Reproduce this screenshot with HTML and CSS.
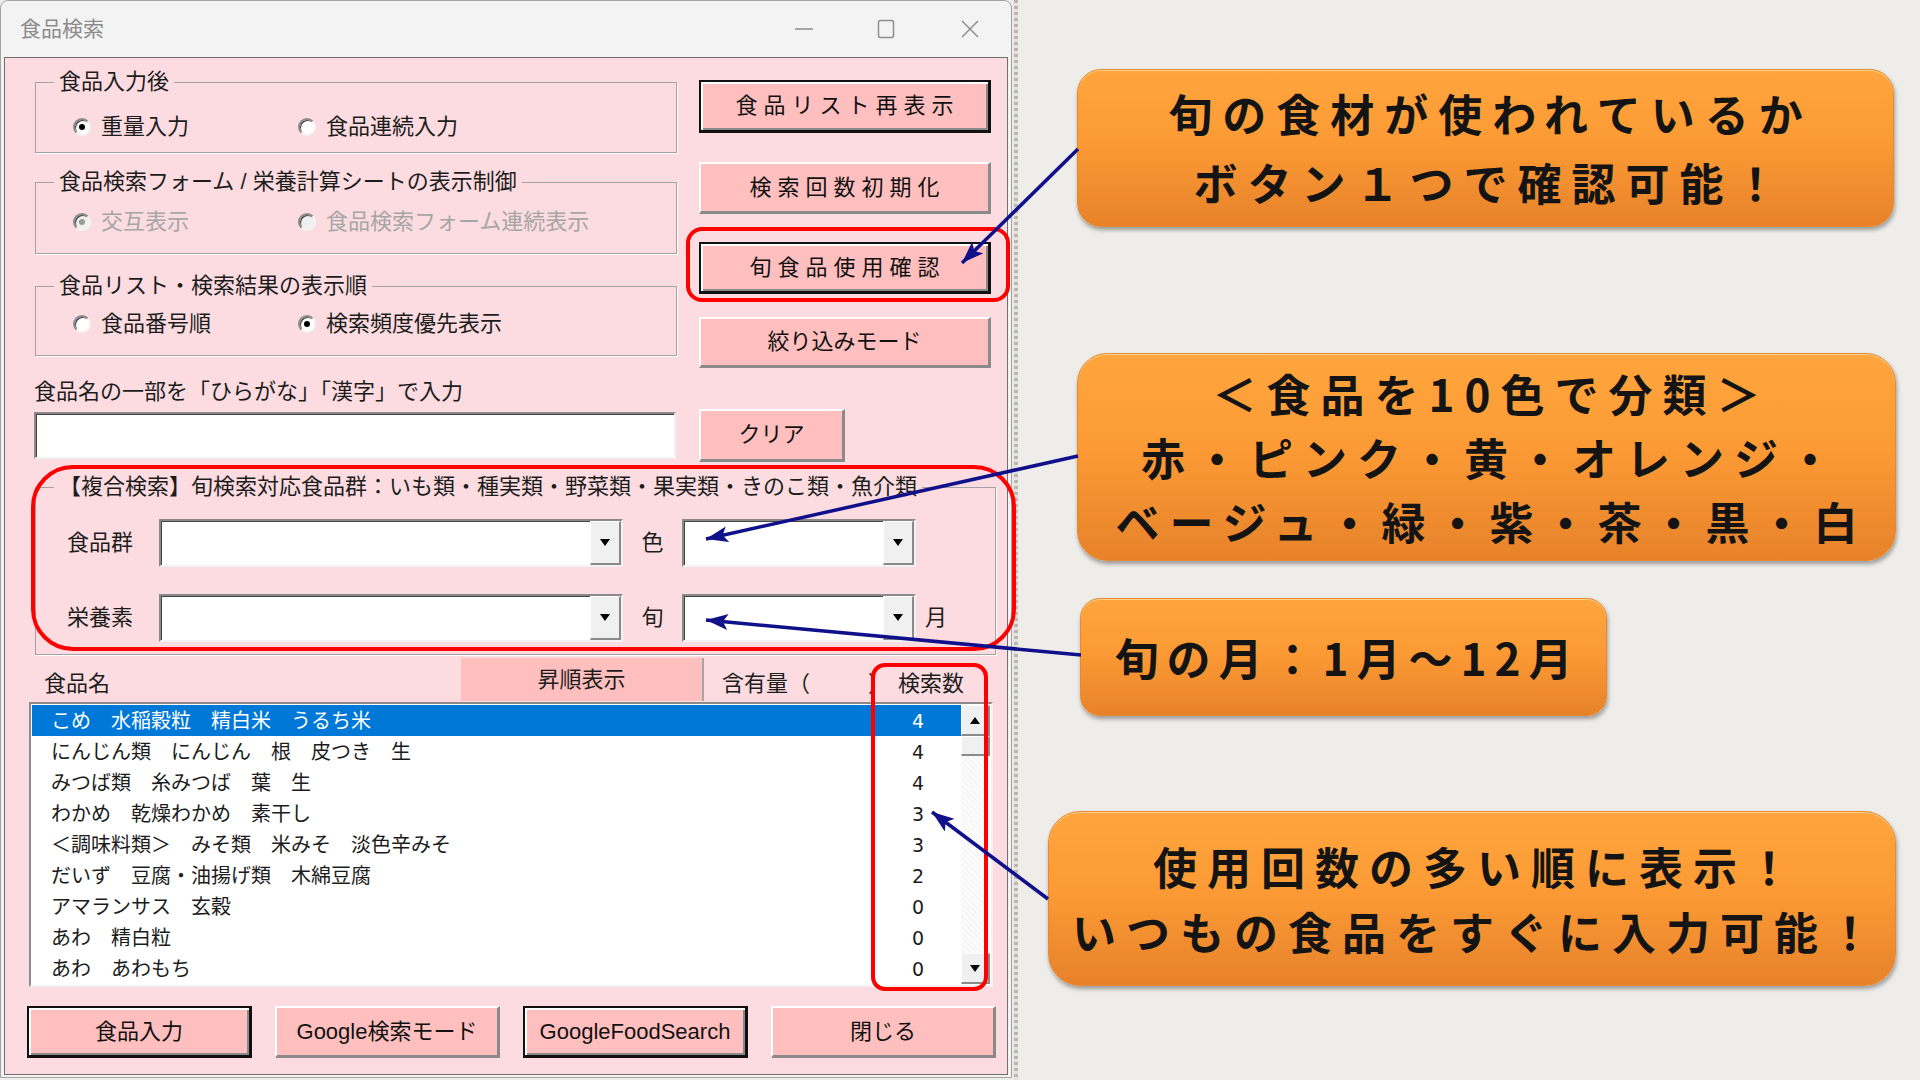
FILE: index.html
```html
<!DOCTYPE html>
<html lang="ja">
<head>
<meta charset="utf-8">
<title>食品検索</title>
<link rel="stylesheet" href="styles.css">
</head>
<body>
<div class="page">
  <div class="window">
    <div class="titlebar">
      <span class="title">食品検索</span>
      <div class="controls">
        <svg class="ctl c-min" viewBox="0 0 20 20"><path d="M1 10h18"/></svg>
        <svg class="ctl c-max" viewBox="0 0 20 20"><rect x="2.5" y="1.5" width="15" height="17" rx="2"/></svg>
        <svg class="ctl c-close" viewBox="0 0 20 20"><path d="M2 2l16 16M18 2L2 18"/></svg>
      </div>
    </div>
    <div class="client">
      <div class="top">
        <div class="leftcol">
          <fieldset class="grp g1">
            <legend>食品入力後</legend>
            <div class="radios">
              <span class="radio on"><span class="dot"></span>重量入力</span>
              <span class="radio"><span class="dot"></span>食品連続入力</span>
            </div>
          </fieldset>
          <fieldset class="grp g2">
            <legend>食品検索フォーム / 栄養計算シートの表示制御</legend>
            <div class="radios disabled">
              <span class="radio on"><span class="dot"></span>交互表示</span>
              <span class="radio"><span class="dot"></span>食品検索フォーム連続表示</span>
            </div>
          </fieldset>
          <fieldset class="grp g3">
            <legend>食品リスト・検索結果の表示順</legend>
            <div class="radios">
              <span class="radio"><span class="dot"></span>食品番号順</span>
              <span class="radio on"><span class="dot"></span>検索頻度優先表示</span>
            </div>
          </fieldset>
        </div>
        <div class="rightcol">
          <div class="btn def sp b1">食品リスト再表示</div>
          <div class="btn sp b2">検索回数初期化</div>
          <div class="btn def sp b3">旬食品使用確認</div>
          <div class="btn b4">絞り込みモード</div>
        </div>
      </div>
      <div class="hint">食品名の一部を「ひらがな」「漢字」で入力</div>
      <div class="inputrow">
        <div class="textbox"></div>
        <div class="btn clear">クリア</div>
      </div>
      <fieldset class="grp g4">
        <legend>【複合検索】旬検索対応食品群：いも類・種実類・野菜類・果実類・きのこ類・魚介類</legend>
        <div class="crow">
          <span class="clabel">食品群</span>
          <div class="combo wide"><div class="drop"><span class="tri-down"></span></div></div>
          <span class="clabel2">色</span>
          <div class="combo narrow"><div class="drop"><span class="tri-down"></span></div></div>
        </div>
        <div class="crow r2">
          <span class="clabel">栄養素</span>
          <div class="combo wide"><div class="drop"><span class="tri-down"></span></div></div>
          <span class="clabel2">旬</span>
          <div class="combo narrow"><div class="drop"><span class="tri-down"></span></div></div>
          <span class="month">月</span>
        </div>
      </fieldset>
      <div class="hdr">
        <div class="h-name">食品名</div>
        <div class="h-sort">昇順表示</div>
        <div class="h-amt"><span>含有量（</span><span class="close-paren">）</span></div>
        <div class="h-cnt">検索数</div>
      </div>
      <div class="listbox">
        <div class="rows">
          <div class="row sel"><span class="nm">こめ　水稲穀粒　精白米　うるち米</span><span class="num">4</span></div>
          <div class="row"><span class="nm">にんじん類　にんじん　根　皮つき　生</span><span class="num">4</span></div>
          <div class="row"><span class="nm">みつば類　糸みつば　葉　生</span><span class="num">4</span></div>
          <div class="row"><span class="nm">わかめ　乾燥わかめ　素干し</span><span class="num">3</span></div>
          <div class="row"><span class="nm">＜調味料類＞　みそ類　米みそ　淡色辛みそ</span><span class="num">3</span></div>
          <div class="row"><span class="nm">だいず　豆腐・油揚げ類　木綿豆腐</span><span class="num">2</span></div>
          <div class="row"><span class="nm">アマランサス　玄穀</span><span class="num">0</span></div>
          <div class="row"><span class="nm">あわ　精白粒</span><span class="num">0</span></div>
          <div class="row"><span class="nm">あわ　あわもち</span><span class="num">0</span></div>
        </div>
        <div class="vscroll">
          <div class="sb-btn"><span class="tri-up"></span></div>
          <div class="sb-thumb"></div>
          <div class="sb-track"></div>
          <div class="sb-btn"><span class="tri-down"></span></div>
        </div>
      </div>
      <div class="bottom">
        <div class="btn def bb">食品入力</div>
        <div class="btn bb">Google検索モード</div>
        <div class="btn def bb">GoogleFoodSearch</div>
        <div class="btn bb">閉じる</div>
      </div>
    </div>
  </div>
  <div class="sliver"></div>
  <div class="notes">
    <div class="callout c1"><span>旬の食材が使われているか</span><span>ボタン１つで確認可能！</span></div>
    <div class="callout c2"><span>＜食品を10色で分類＞</span><span>赤・ピンク・黄・オレンジ・</span><span>ベージュ・緑・紫・茶・黒・白</span></div>
    <div class="callout c3"><span>旬の月：1月～12月</span></div>
    <div class="callout c4"><span>使用回数の多い順に表示！</span><span>いつもの食品をすぐに入力可能！</span></div>
  </div>
</div>
<svg class="overlay" width="1920" height="1080" viewBox="0 0 1920 1080">
  <defs>
    <marker id="ah" markerUnits="userSpaceOnUse" markerWidth="24" markerHeight="18" refX="22" refY="8" orient="auto">
      <path d="M0 0 L22 8 L0 16 L5 8 Z" fill="#10108a"/>
    </marker>
  </defs>
  <rect class="hl" x="688" y="229" width="320" height="71" rx="14"/>
  <rect class="hl" x="33" y="467" width="981" height="182" rx="40"/>
  <rect class="hl" x="873" y="665" width="113" height="324" rx="12"/>
  <line class="ar" x1="1078" y1="149" x2="962" y2="263" marker-end="url(#ah)"/>
  <line class="ar" x1="1078" y1="456" x2="706" y2="539" marker-end="url(#ah)"/>
  <line class="ar" x1="1081" y1="655" x2="706" y2="620" marker-end="url(#ah)"/>
  <line class="ar" x1="1048" y1="899" x2="932" y2="812" marker-end="url(#ah)"/>
</svg>
</body>
</html>
```
FILE: styles.css
```css
html, body {
  margin: 0;
  padding: 0;
}
body {
  width: 1920px;
  height: 1080px;
  overflow: hidden;
  position: relative;
  background: #eeede9;
  font-family: "Liberation Sans", "Noto Sans CJK JP", sans-serif;
  color: #1c1c1c;
}
.page {
  display: flex;
  align-items: flex-start;
  height: 1080px;
}

/* window */
.window {
  width: 1012px;
  height: 1078px;
  box-sizing: border-box;
  background: #f3f3f3;
  border: 1px solid #a2a2a2;
  border-radius: 8px 8px 0 0;
  display: flex;
  flex-direction: column;
  flex: none;
}
.titlebar {
  height: 56px;
  display: flex;
  align-items: center;
  padding-left: 19px;
  flex: none;
}
.title {
  font-size: 21px;
  color: #8c8c8c;
  line-height: 24px;
}
.controls {
  margin-left: auto;
  display: flex;
  align-items: center;
  padding-right: 31px;
}
.ctl {
  width: 20px;
  height: 20px;
  fill: none;
  stroke: #8e8e8e;
  stroke-width: 1.5;
}
.c-max { margin-left: 62px; }
.c-close { margin-left: 64px; }

.client {
  flex: 1;
  margin: 0 3px 2px 3px;
  border: 1px solid #6f6f6f;
  background: #fcdce1;
  font-size: 22px;
  line-height: 24px;
}

/* top area */
.top {
  display: flex;
  align-items: flex-start;
  margin-top: 12px;
  padding-left: 30px;
}
.leftcol {
  width: 642px;
  flex: none;
}
.rightcol {
  width: 292px;
  margin-left: 22px;
  padding-top: 10px;
  display: flex;
  flex-direction: column;
}

.grp {
  margin: 0;
  padding: 0;
  border: 1px solid #a3a3a3;
  box-shadow: 1px 1px 0 #ffffff;
  min-width: 0;
  box-sizing: border-box;
}
.grp legend {
  margin-left: 18px;
  padding: 0 5px;
  font-size: 22px;
  line-height: 24px;
  color: #1c1c1c;
}
.g1 { width: 642px; padding: 21px 0 13px; }
.g2 { width: 642px; margin-top: 17px; padding: 16px 0 19px; }
.g3 { width: 642px; margin-top: 20px; padding: 14px 0 19px; }

.radios {
  display: flex;
  align-items: center;
  height: 24px;
  padding-left: 37px;
}
.radio {
  display: inline-flex;
  align-items: center;
  width: 225px;
  flex: none;
  white-space: nowrap;
}
.radio .dot {
  width: 18px;
  height: 18px;
  box-sizing: border-box;
  border-radius: 50%;
  background: #ffffff;
  border: 2px solid;
  border-color: #8a8a8a #f4f4f4 #f4f4f4 #8a8a8a;
  box-shadow: inset 1px 1px 0 #3c3c3c;
  margin-right: 10px;
  display: flex;
  align-items: center;
  justify-content: center;
  flex: none;
}
.radio.on .dot::after {
  content: "";
  width: 6px;
  height: 6px;
  border-radius: 50%;
  background: #000;
}
.radios.disabled .radio { color: #a6a6a6; }
.radios.disabled .radio .dot { background: #f0f0f0; }
.radios.disabled .radio.on .dot::after { background: #9a9a9a; }

/* buttons */
.btn {
  box-sizing: border-box;
  background: #ffbfbf;
  border-style: solid;
  border-width: 2px 3px 3px 2px;
  border-color: #ffffff #8a8a8a #8a8a8a #ffffff;
  display: flex;
  align-items: center;
  justify-content: center;
  font-size: 22px;
  line-height: 24px;
  color: #111;
  white-space: nowrap;
}
.btn.def {
  border-width: 2px 3px 3px 2px;
  border-color: #111;
  box-shadow: inset 2px 2px 0 #ffffff, inset -2px -2px 0 #8a8a8a;
}
.btn.sp {
  letter-spacing: 6px;
  padding-left: 6px;
}
.b1 { height: 53px; }
.b2 { height: 52px; margin-top: 29px; }
.b3 { height: 52px; margin-top: 28px; }
.b4 { height: 51px; margin-top: 23px; }

.hint {
  margin-top: 12px;
  padding-left: 29px;
  height: 24px;
}
.inputrow {
  display: flex;
  align-items: center;
  margin-top: 5px;
  padding-left: 29px;
}
.textbox {
  width: 642px;
  height: 47px;
  box-sizing: border-box;
  background: #fff;
  border: 2px solid;
  border-color: #8a8a8a #f2f2f2 #f2f2f2 #8a8a8a;
  box-shadow: inset 1px 1px 0 #444;
}
.clear {
  width: 146px;
  height: 53px;
  margin-left: 23px;
}

/* compound search */
.g4 {
  width: 961px;
  margin: 13px 0 0 30px;
  padding: 20px 0 12px;
}
.crow {
  display: flex;
  align-items: center;
  height: 48px;
  padding-left: 31px;
}
.crow.r2 { margin-top: 27px; }
.clabel {
  width: 92px;
  flex: none;
}
.clabel2 {
  width: 59px;
  flex: none;
  text-align: center;
}
.month { margin-left: 9px; }
.combo {
  height: 48px;
  box-sizing: border-box;
  background: #fff;
  border: 2px solid;
  border-color: #8a8a8a #f2f2f2 #f2f2f2 #8a8a8a;
  box-shadow: inset 1px 1px 0 #444;
  display: flex;
  justify-content: flex-end;
  flex: none;
}
.combo.wide { width: 464px; }
.combo.narrow { width: 234px; }
.drop {
  width: 31px;
  height: 100%;
  box-sizing: border-box;
  background: #f0f0f0;
  border-style: solid;
  border-width: 1px 2px 2px 1px;
  border-color: #ffffff #8a8a8a #8a8a8a #ffffff;
  display: flex;
  align-items: center;
  justify-content: center;
}
.tri-down {
  width: 0;
  height: 0;
  border-left: 5px solid transparent;
  border-right: 5px solid transparent;
  border-top: 7px solid #000;
}
.tri-up {
  width: 0;
  height: 0;
  border-left: 5px solid transparent;
  border-right: 5px solid transparent;
  border-bottom: 7px solid #000;
}

/* list header */
.hdr {
  display: flex;
  height: 43px;
  margin: 3px 0 0 24px;
  width: 964px;
}
.h-name {
  width: 432px;
  padding-left: 15px;
  box-sizing: border-box;
  display: flex;
  align-items: flex-end;
  padding-bottom: 5px;
}
.h-sort {
  width: 243px;
  box-sizing: border-box;
  background: #ffbfbf;
  border-right: 2px solid #a6a6a6;
  display: flex;
  align-items: center;
  justify-content: center;
}
.h-amt {
  width: 194px;
  box-sizing: border-box;
  padding-left: 18px;
  display: flex;
  align-items: flex-end;
  padding-bottom: 5px;
}
.close-paren { margin-left: 58px; }
.h-cnt {
  display: flex;
  align-items: flex-end;
  padding-bottom: 5px;
}

/* list box */
.listbox {
  display: flex;
  width: 964px;
  height: 285px;
  box-sizing: border-box;
  margin: 1px 0 0 24px;
  background: #fff;
  border: 2px solid;
  border-color: #8a8a8a #f2f2f2 #f2f2f2 #8a8a8a;
  padding: 1px;
}
.rows {
  flex: 1;
  display: flex;
  flex-direction: column;
}
.row {
  height: 31px;
  display: flex;
  align-items: center;
  justify-content: space-between;
  font-size: 20px;
  color: #1c1c1c;
  flex: none;
}
.row .nm { padding-left: 19px; white-space: nowrap; }
.row .num {
  padding-right: 37px;
  font-family: "DejaVu Sans", "Liberation Sans", sans-serif;
  font-size: 19px;
}
.row.sel {
  background: #0078d7;
  color: #fff;
}
.vscroll {
  width: 29px;
  display: flex;
  flex-direction: column;
  background: repeating-linear-gradient(45deg, #f6f6f6 0 2px, #fcfcfc 2px 4px);
}
.sb-btn {
  height: 31px;
  box-sizing: border-box;
  background: #f0f0f0;
  border-style: solid;
  border-width: 1px 2px 2px 1px;
  border-color: #ffffff #8a8a8a #8a8a8a #ffffff;
  display: flex;
  align-items: center;
  justify-content: center;
}
.sb-thumb {
  height: 20px;
  box-sizing: border-box;
  background: #f0f0f0;
  border-style: solid;
  border-width: 1px 2px 2px 1px;
  border-color: #ffffff #8a8a8a #8a8a8a #ffffff;
}
.sb-track { flex: 1; }

/* bottom buttons */
.bottom {
  display: flex;
  gap: 23px;
  margin: 19px 0 0 22px;
}
.bb {
  width: 225px;
  height: 52px;
}

/* right side */
.sliver {
  width: 6px;
  height: 1080px;
  flex: none;
  background: repeating-linear-gradient(180deg, #bdb7ad 0 3px, #e6e3dd 3px 6px);
  border-left: 2px solid #e9e9e9;
  box-sizing: border-box;
}
.notes {
  display: flex;
  flex-direction: column;
  align-items: flex-start;
  flex: 1;
}
.callout {
  box-sizing: border-box;
  display: flex;
  flex-direction: column;
  align-items: center;
  justify-content: center;
  background: linear-gradient(180deg, #ffa53d 0%, #fc9b35 45%, #e7822a 100%);
  border: 1px solid #e48a33;
  border-radius: 24px;
  box-shadow: 1px 3px 4px rgba(0, 0, 0, 0.35), inset 0 1px 0 rgba(255, 220, 160, 0.8);
  font-family: "Noto Sans CJK JP", sans-serif;
  font-weight: 700;
  font-size: 44px;
  letter-spacing: 10px;
  color: #141414;
  white-space: nowrap;
}
.callout span { padding-left: 10px; }
.c1 {
  margin: 69px 0 0 59px;
  width: 817px;
  height: 158px;
  line-height: 69px;
}
.c2 {
  margin: 126px 0 0 59px;
  width: 819px;
  height: 208px;
  line-height: 64px;
  border-radius: 30px;
}
.c3 {
  margin: 37px 0 0 62px;
  width: 527px;
  height: 118px;
  line-height: 64px;
  border-radius: 20px;
  letter-spacing: 8px;
}
.c3 span { padding-left: 8px; }
.c4 {
  margin: 95px 0 0 30px;
  width: 848px;
  height: 175px;
  line-height: 65px;
  border-radius: 32px;
}

/* annotations overlay */
.overlay {
  position: absolute;
  left: 0;
  top: 0;
  pointer-events: none;
}
.hl {
  fill: none;
  stroke: #ff0000;
  stroke-width: 4;
}
.ar {
  stroke: #10108a;
  stroke-width: 3.5;
}
```
